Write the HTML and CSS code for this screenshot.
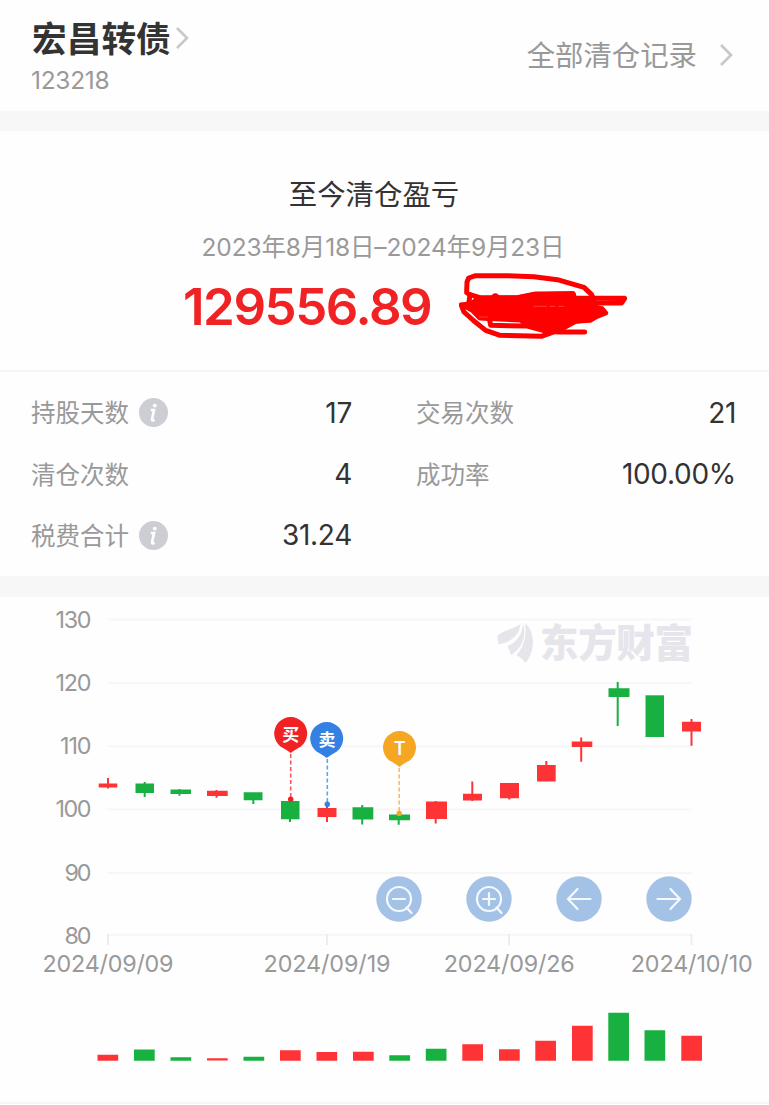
FILE: index.html
```html
<!DOCTYPE html>
<html lang="zh-CN">
<head>
<meta charset="utf-8">
<title>宏昌转债</title>
<link rel="stylesheet" href="styles.css">
</head>
<body>

<div class="header">
	<div class="stock">
		<div class="stock_name">宏昌转债
			<svg class="name_arrow" width="14" height="24" viewBox="0 0 14 24"><path d="M2 2L12 12L2 22"/></svg>
		</div>
		<div class="stock_code">123218</div>
	</div>
	<div class="record_link"><span class="record_text">全部清仓记录</span>
		<svg class="link_arrow" width="14" height="24" viewBox="0 0 14 24"><path d="M2 2L12 12L2 22"/></svg>
	</div>
</div>

<div class="summary">
	<div class="summary_title">至今清仓盈亏</div>
	<div class="summary_date">2023年8月18日–2024年9月23日</div>
	<div class="summary_amount">
		<span class="amount">129556.89</span>
		<svg class="scribble" width="170" height="68" viewBox="55 50 510 204">
			<path d="M85 140L88 118L78 112L79 80L84 68L105 61L200 61L280 64L350 73L430 96L453 118L458 130"/>
			<path d="M88 118L120 128L230 128L280 118L397 115L400 128L552 129L543 143L430 143"/>
			<path d="M62 149L70 170L100 197L135 225L178 240L302 243L360 222L405 198L448 192"/>
			<path d="M62 149L90 149L115 184L146 190L150 210L260 212L310 226L355 230L432 230"/>
			<path class="solid" d="M68 149L95 143L115 128L230 127L285 116L397 115L402 129L458 130L460 155L484 160L495 173L465 185L448 195L400 198L360 222L310 224L255 206L240 194L118 188L95 165Z"/>
			<path class="gap" d="M280 153H318M328 153H343M354 153H370M116 185H140"/>
			<circle cx="164" cy="126" r="5"/>
		</svg>
	</div>
</div>

<div class="stats">
	<div class="stat">
		<span class="label">持股天数</span>
		<svg class="info" width="29" height="29" viewBox="0 0 29 29"><circle cx="14.5" cy="14.5" r="14.5"/><path d="M11.8 12H15L13 21.5Q12.8 23.3 15.6 21.8"/><circle class="dot" cx="15.8" cy="7.6" r="1.9"/></svg>
		<span class="value">17</span>
	</div>
	<div class="stat"><span class="label">交易次数</span><span class="value">21</span></div>
	<div class="stat"><span class="label">清仓次数</span><span class="value">4</span></div>
	<div class="stat"><span class="label">成功率</span><span class="value">100.00%</span></div>
	<div class="stat">
		<span class="label">税费合计</span>
		<svg class="info" width="29" height="29" viewBox="0 0 29 29"><circle cx="14.5" cy="14.5" r="14.5"/><path d="M11.8 12H15L13 21.5Q12.8 23.3 15.6 21.8"/><circle class="dot" cx="15.8" cy="7.6" r="1.9"/></svg>
		<span class="value">31.24</span>
	</div>
</div>

<div class="chart">
	<svg class="chart_svg" width="769" height="507" viewBox="0 597 769 507">
		<!-- grid and axis -->
		<path class="grid" d="M108 619.5H691.5M108 683H691.5M108 746.3H691.5M108 809.5H691.5M108 873H691.5M108 934.7H691.5"/>
		<path class="tick" d="M108 934V945M327 934V945M509 934V945M691.5 934V945"/>
		<g class="axis_y">
			<text x="91.5" y="627.7" textLength="36">130</text>
			<text x="91.5" y="691" textLength="36">120</text>
			<text x="91.5" y="754.3" textLength="31.5">110</text>
			<text x="91.5" y="817.3" textLength="36">100</text>
			<text x="91.5" y="880.5" textLength="27">90</text>
			<text x="91.5" y="943.7" textLength="27">80</text>
		</g>
		<g class="axis_x">
			<text x="108" y="971.5" textLength="131">2024/09/09</text>
			<text x="327" y="971.5" textLength="127">2024/09/19</text>
			<text x="509.3" y="971.5" textLength="131">2024/09/26</text>
			<text x="691.7" y="971.5" textLength="122">2024/10/10</text>
		</g>

		<!-- watermark -->
		<g class="mark">
			<path d="M497.3 636C504 629 513 630 520.5 624C519 636 511 642 498.5 644.5Z"/>
			<path d="M507.5 646C517 642 522 635 523 623.5C527 636 522 648 511 655Z"/>
			<path d="M516.5 655C523 648 527 637 525 623C535 632 536 650 525.5 663Q522 658 516.5 655Z"/>
			<text x="540" y="657" textLength="153">东方财富</text>
		</g>

		<!-- candles -->
		<g class="up">
			<path d="M98.7 783.5H117.3V787.5H98.7ZM107 778H109V788.5H107Z"/>
			<path d="M207 790.7H227.7V796H207ZM215.5 790H217.5V797.7H215.5Z"/>
			<path d="M317.5 808H336.5V817H317.5ZM326 806H328V822H326Z"/>
			<path d="M426 801.5H447V819H426ZM434.7 801H436.7V823.5H434.7Z"/>
			<path d="M463 793.7H482V800.5H463ZM471.3 781.5H473.3V801H471.3Z"/>
			<path d="M500 783H519V798.3H500ZM508.3 783H510.3V799.5H508.3Z"/>
			<path d="M537 765H555.7V781.5H537ZM545.3 761H547.3V781H545.3Z"/>
			<path d="M571.7 741.5H592.3V747H571.7ZM580.2 737.5H582.2V761.7H580.2Z"/>
			<path d="M682 721.7H701V731.5H682ZM690.5 719H692.5V745.7H690.5Z"/>
		</g>
		<g class="down">
			<path d="M135.5 783.5H154V793H135.5ZM143.7 782H145.7V797H143.7Z"/>
			<path d="M170.5 789.5H191V794H170.5ZM178.5 789H180.5V795.7H178.5Z"/>
			<path d="M243.7 792.3H262.5V800.3H243.7ZM252.3 792.3H254.3V804H252.3Z"/>
			<path d="M281 801H299.5V819.3H281ZM289 801H291V822H289Z"/>
			<path d="M352.5 807.3H373.3V819.5H352.5ZM361.2 805H363.2V824.5H361.2Z"/>
			<path d="M389 814.5H410V820.2H389ZM397.7 814.5H399.7V824.7H397.7Z"/>
			<path d="M608.5 688.3H629.5V697H608.5ZM616.7 682H618.7V726H616.7Z"/>
			<path d="M645.5 695.3H664V737H645.5Z"/>
		</g>

		<!-- trade pins -->
		<g class="pin buy">
			<path class="lead" d="M290.7 754V797"/>
			<circle cx="290.7" cy="799.3" r="2.7"/>
			<path d="M290.7 753Q288 750.5 280.5 746.5A16.5 16.5 0 1 1 300.9 746.5Q293.5 750.5 290.7 753Z"/>
			<text x="290.7" y="740.5">买</text>
		</g>
		<g class="pin sell">
			<path class="lead" d="M327.3 759V802"/>
			<circle cx="327.3" cy="804.3" r="2.7"/>
			<path d="M326.7 758Q324 755.5 316.5 751.5A16.5 16.5 0 1 1 336.9 751.5Q329.5 755.5 326.7 758Z"/>
			<text x="326.9" y="745.5">卖</text>
		</g>
		<g class="pin both">
			<path class="lead" d="M399.2 768V811"/>
			<circle cx="399.2" cy="813.4" r="2.7"/>
			<path d="M399.5 767Q397 764.5 389.3 760.5A16.5 16.5 0 1 1 409.7 760.5Q402 764.5 399.5 767Z"/>
			<text class="t" x="399.7" y="754.5">T</text>
		</g>

		<!-- volume -->
		<g class="up">
			<path d="M97.5 1054.7h20.7V1060.7h-20.7ZM207 1058.3h20.7V1060.5h-20.7ZM280 1050.3h20.7V1060.7h-20.7ZM316.5 1052h20.7V1060.7h-20.7ZM353 1051.7h20.7V1060.7h-20.7Z"/>
			<path d="M462.3 1044.3h20.7V1060.7h-20.7ZM499 1049.2h20.7V1060.7h-20.7ZM535.3 1040.7h20.7V1060.7h-20.7ZM572 1025.8h20.7V1060.7h-20.7ZM681.3 1035.7h20.7V1060.7h-20.7Z"/>
		</g>
		<g class="down">
			<path d="M134 1049.5h20.7V1060.7h-20.7ZM170.5 1057.3h20.7V1060.7h-20.7ZM243.5 1056.8h20.7V1060.7h-20.7ZM389.3 1055.3h20.7V1060.7h-20.7Z"/>
			<path d="M425.8 1048.7h20.7V1060.7h-20.7ZM608.3 1012.8h20.7V1060.7h-20.7ZM644.5 1030.2h20.7V1060.7h-20.7Z"/>
		</g>
	</svg>

	<div class="tools">
		<svg class="tool" width="46" height="46" viewBox="0 0 46 46"><circle class="bg" cx="23" cy="23" r="22.7"/><circle cx="23" cy="23" r="12"/><path d="M17 23H29M30.5 31.5L35.5 37"/></svg>
		<svg class="tool" width="46" height="46" viewBox="0 0 46 46"><circle class="bg" cx="23" cy="23" r="22.7"/><circle cx="23" cy="23" r="12"/><path d="M17 23H29M23 17V29M30.5 31.5L35.5 37"/></svg>
		<svg class="tool" width="46" height="46" viewBox="0 0 46 46"><circle class="bg" cx="23" cy="23" r="22.7"/><path d="M34.5 23H12.5M21.5 13L12 23L21.5 33"/></svg>
		<svg class="tool" width="46" height="46" viewBox="0 0 46 46"><circle class="bg" cx="23" cy="23" r="22.7"/><path d="M11.5 23H33.5M24.5 13L34 23L24.5 33"/></svg>
	</div>
</div>

</body>
</html>
```
FILE: styles.css
```css
	*
	{
		box-sizing : border-box;
	}
	body
	{
		margin : 0;
		background-color : #fefefe;
		font-family : Inter, "Noto Sans CJK SC", sans-serif;
		color : #333;
	}
	svg
	{
		display : block;
		flex : none;
	}
	.header
	{
		display : flex;
		justify-content : space-between;
		height : 131px;
		padding : 17px 36px 0 32px;
		border-bottom : 20px solid #f7f7f7;
	}
	.stock_name
	{
		display : flex;
		align-items : center;
		gap : 4px;
		height : 41px;
		font-family : "Noto Sans CJK SC", sans-serif;
		font-size : 34.7px;
		font-weight : bold;
		line-height : 39px;
	}
	.name_arrow, .link_arrow
	{
		fill : none;
		stroke : #c8c8c8;
		stroke-width : 2.6;
	}
	.stock_code
	{
		margin-top : 7px;
		margin-left : -1px;
		font-size : 24.5px;
		line-height : 30px;
		letter-spacing : -0.3px;
		color : #999;
	}
	.record_link
	{
		display : flex;
		align-items : center;
		gap : 22px;
		height : 76px;
		font-family : "Noto Sans CJK SC", sans-serif;
		font-size : 28.4px;
		color : #999;
	}
	.record_text
	{
		padding-bottom : 4px;
	}
	.summary
	{
		display : flex;
		flex-direction : column;
		align-items : center;
		height : 241px;
		padding-top : 42px;
		border-bottom : 2px solid #f5f5f5;
	}
	.summary_title
	{
		margin-right : 21px;
		font-family : "Noto Sans CJK SC", sans-serif;
		font-size : 28.4px;
		line-height : 40px;
	}
	.summary_date
	{
		margin-top : 17px;
		margin-right : 3px;
		font-size : 24.5px;
		line-height : 34px;
		letter-spacing : -0.15px;
		color : #999;
	}
	.summary_amount
	{
		display : flex;
		gap : 27px;
		width : 587px;
		margin-top : 8px;
		padding-left : 92px;
	}
	.amount
	{
		width : 249px;
		font-size : 51px;
		font-weight : 600;
		line-height : 70px;
		letter-spacing : -1.45px;
		white-space : nowrap;
		color : #f12224;
	}
	.scribble
	{
		fill : none;
		stroke : #fe0000;
		stroke-width : 15;
		stroke-linecap : round;
		stroke-linejoin : round;
	}
	.scribble .solid
	{
		fill : #fe0000;
	}
	.scribble .gap
	{
		stroke : #ff5a5a;
		stroke-width : 2;
	}
	.stats
	{
		display : grid;
		grid-template-columns : 321px 320px;
		column-gap : 64px;
		grid-auto-rows : 61.4px;
		height : 225px;
		padding : 10px 0 0 31px;
		border-bottom : 21px solid #f7f7f7;
	}
	.stat
	{
		display : flex;
		align-items : center;
	}
	.label
	{
		padding-bottom : 2px;
		font-family : "Noto Sans CJK SC", sans-serif;
		font-size : 24.5px;
		color : #999;
	}
	.info
	{
		margin-left : 10px;
		fill : #cdced3;
	}
	.info path
	{
		fill : none;
		stroke : #fff;
		stroke-width : 2.6;
	}
	.info .dot
	{
		fill : #fff;
	}
	.value
	{
		margin-left : auto;
		font-size : 28px;
		letter-spacing : -0.3px;
	}
	.chart
	{
		position : relative;
		height : 507px;
		border-bottom : 2px solid #f5f5f5;
	}
	.grid, .tick
	{
		fill : none;
		stroke : #f6f6f6;
		stroke-width : 2;
	}
	.tick
	{
		stroke : #ededed;
	}
	.axis_y, .axis_x
	{
		font-size : 23.3px;
		fill : #999;
	}
	.axis_y
	{
		text-anchor : end;
	}
	.axis_x
	{
		text-anchor : middle;
	}
	.mark
	{
		font-family : "Noto Sans CJK SC", sans-serif;
		font-size : 38.5px;
		font-weight : 900;
		fill : #e5e5eb;
	}
	.up
	{
		fill : #fd3336;
	}
	.down
	{
		fill : #18b040;
	}
	.pin text
	{
		font-family : "Noto Sans CJK SC", sans-serif;
		font-size : 17px;
		font-weight : bold;
		text-anchor : middle;
		fill : #fff;
	}
	.pin .t
	{
		font-family : Inter, sans-serif;
		font-size : 18px;
		font-weight : 600;
	}
	.lead
	{
		fill : none;
		stroke-width : 1.6;
		stroke-dasharray : 4 2.5;
		opacity : 0.75;
	}
	.buy
	{
		fill : #f12224;
	}
	.buy .lead
	{
		stroke : #f12224;
	}
	.sell
	{
		fill : #3480e3;
	}
	.sell .lead
	{
		stroke : #3480e3;
	}
	.both
	{
		fill : #f5a623;
	}
	.both .lead
	{
		stroke : #f5a623;
	}
	/* zoom and scroll buttons lie over the chart */
	.tools
	{
		position : absolute;
		left : 376px;
		top : 279px;
		display : flex;
		gap : 44px;
	}
	.tool
	{
		fill : none;
		stroke : #f4f9ff;
		stroke-width : 2.2;
		stroke-linecap : round;
	}
	.tool .bg
	{
		fill : #a4c2e6;
		stroke : none;
	}
```
